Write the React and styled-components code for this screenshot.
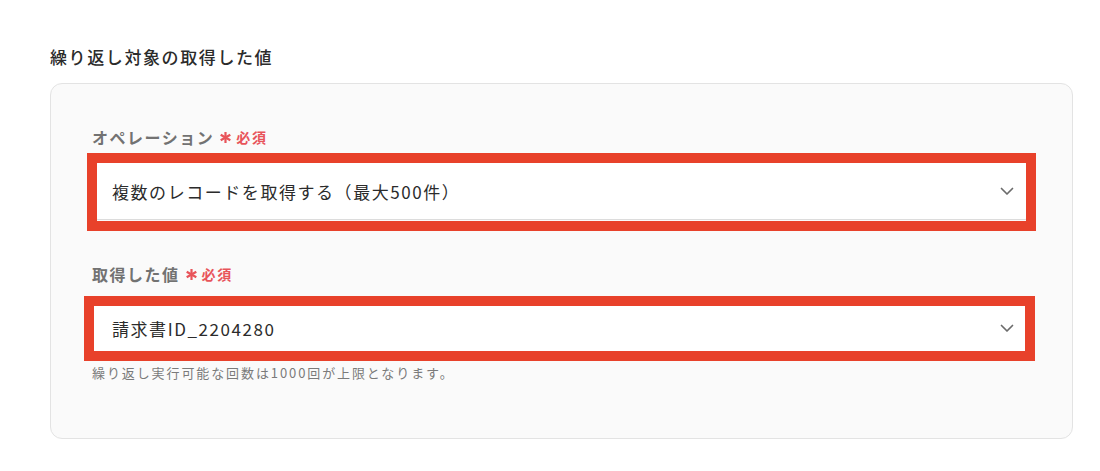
import React from 'react';
import styled, { createGlobalStyle } from 'styled-components';

const GlobalStyle = createGlobalStyle`
  html, body {
    margin: 0;
    padding: 0;
    background: #ffffff;
    font-family: "Noto Sans CJK JP", "Noto Sans", sans-serif;
    color: #333333;
  }
`;

const Page = styled.div`
  padding: 45px 27px 32px 50px;
`;

const Title = styled.h2`
  margin: 0 0 14px;
  font-size: 17px;
  line-height: 24px;
  font-weight: 500;
  letter-spacing: 1.6px;
  color: #2b2b2b;
`;

const Card = styled.div`
  background: #fafafa;
  border: 1px solid #e3e3e3;
  border-radius: 12px;
  padding: 41px 41px 56px;
  display: flex;
  flex-direction: column;
`;

const Field = styled.div`
  display: flex;
  flex-direction: column;
  margin-top: ${p => p.$gap || 0}px;
`;

const Label = styled.label`
  display: flex;
  align-items: center;
  gap: 5px;
  font-size: 16px;
  line-height: 24px;
  font-weight: 700;
  letter-spacing: 1.5px;
  color: #727272;
  margin-bottom: 13px;
`;

const Required = styled.span`
  display: inline-flex;
  align-items: center;
  gap: 4px;
  font-size: 14px;
  font-weight: 700;
  letter-spacing: 1.8px;
  color: #e8545a;
`;

const Star = () => (
  <svg width="13" height="13" viewBox="0 0 13 13">
    <g stroke="#e8545a" strokeWidth="2.2" strokeLinecap="butt">
      <path d="M6.5 1 L6.5 12" />
      <path d="M1.7 3.75 L11.3 9.25" />
      <path d="M1.7 9.25 L11.3 3.75" />
    </g>
  </svg>
);

const SelectWrap = styled.div`
  position: relative;
`;

const Select = styled.div`
  height: 58px;
  box-sizing: border-box;
  background: #ffffff;
  border: 1px solid #dcdcdc;
  border-radius: 6px;
  display: flex;
  align-items: center;
  justify-content: space-between;
  padding: 0 16px 0 19px;
  font-size: 17px;
  letter-spacing: 1.55px;
  color: #2b2b2b;
`;

const Highlight = styled.div`
  position: absolute;
  top: ${p => p.$t}px;
  bottom: ${p => p.$b}px;
  left: ${p => p.$l}px;
  right: ${p => p.$r}px;
  border: 10px solid #e8412a;
  pointer-events: none;
`;

const Hint = styled.p`
  margin: 7px 0 0;
  font-size: 13px;
  line-height: 18px;
  letter-spacing: 1.9px;
  color: #7a7a7a;
`;

const Chevron = () => (
  <svg width="14" height="9" viewBox="0 0 14 9" fill="none">
    <path d="M1.5 1.5 L7 7 L12.5 1.5" stroke="#6b6b6b" strokeWidth="1.7" strokeLinecap="round" strokeLinejoin="round" />
  </svg>
);

const fields = [
  {
    label: 'オペレーション',
    value: '複数のレコードを取得する（最大500件）',
    box: { t: -9, b: -11, l: -5, r: -5 },
  },
  {
    label: '取得した値',
    value: '請求書ID_2204280',
    box: { t: -3, b: -4, l: -8, r: -4 },
    hint: '繰り返し実行可能な回数は1000回が上限となります。',
  },
];

export default function App() {
  return (
    <>
      <GlobalStyle />
      <Page>
        <Title>繰り返し対象の取得した値</Title>
        <Card>
          {fields.map((f, i) => (
            <Field key={f.label} $gap={i === 0 ? 0 : 42}>
              <Label>
                {f.label}
                <Required><Star />必須</Required>
              </Label>
              <SelectWrap>
                <Select>
                  <span>{f.value}</span>
                  <Chevron />
                </Select>
                <Highlight $t={f.box.t} $b={f.box.b} $l={f.box.l} $r={f.box.r} />
              </SelectWrap>
              {f.hint && <Hint>{f.hint}</Hint>}
            </Field>
          ))}
        </Card>
      </Page>
    </>
  );
}
